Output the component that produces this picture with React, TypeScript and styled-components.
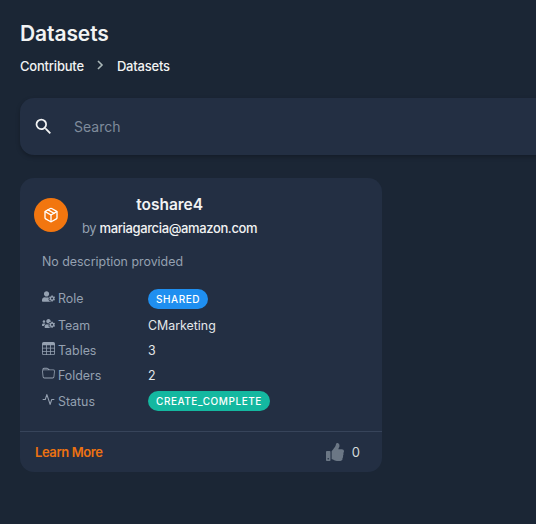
import { FC, Fragment, ReactNode } from 'react'
import styled, { createGlobalStyle } from 'styled-components'
import { Package } from 'lucide-react'
import { BsFolder, BsTable } from 'react-icons/bs'
import { FaThumbsUp, FaUserCog, FaUsersCog } from 'react-icons/fa'
import { FiActivity } from 'react-icons/fi'
import { MdSearch } from 'react-icons/md'

const GlobalStyle = createGlobalStyle`
  html, body {
    margin: 0;
    width: 536px;
    height: 524px;
    overflow: hidden;
    background: #1b2635;
    font-family: Inter, "Liberation Sans", sans-serif;
    color: #f2f3f3;
  }
`

const Page = styled.div`
  box-sizing: border-box;
  width: 536px;
  height: 524px;
  padding: 20px 0 0 20px;
  overflow: hidden;
`

const Heading = styled.h1`
  margin: 0;
  font-size: 21px;
  line-height: 28px;
  font-weight: 600;
  letter-spacing: -0.1px;
`

const Crumbs = styled.nav`
  display: flex;
  align-items: center;
  gap: 11.5px;
  margin-top: 8px;
  font-size: 13px;
  line-height: 20px;
  font-weight: 500;
  letter-spacing: -0.2px;

  svg {
    margin-bottom: 3px;
  }
`

const SearchBar = styled.div`
  display: flex;
  align-items: center;
  gap: 20px;
  width: 560px;
  height: 57px;
  margin-top: 22px;
  padding-left: 13px;
  border-radius: 14px;
  background: #232f43;
  box-sizing: border-box;
  box-shadow: 0 2px 4px rgba(0, 0, 0, 0.25);
`

const SearchText = styled.span`
  font-size: 14px;
  color: #7f8b9b;
`

const Card = styled.section`
  width: 362px;
  height: 294px;
  margin-top: 23px;
  display: flex;
  flex-direction: column;
  border-radius: 14px;
  background: #232f43;
`

const CardBody = styled.div`
  flex: 1;
  box-sizing: border-box;
  padding: 15px 14px 0 14px;
`

const CardHeader = styled.div`
  display: flex;
  gap: 14px;
`

const Badge = styled.div`
  display: flex;
  align-items: center;
  justify-content: center;
  width: 34px;
  height: 34px;
  margin-top: 5px;
  border-radius: 50%;
  background: #f2760f;
`

const Titles = styled.div`
  display: flex;
  flex-direction: column;
  align-items: center;
`

const Title = styled.div`
  font-size: 15.5px;
  line-height: 24px;
  font-weight: 600;
`

const Owner = styled.div`
  font-size: 13px;
  line-height: 20px;
  letter-spacing: -0.37px;
  color: #95a1b1;
  margin-top: 1px;

  b {
    font-weight: 500;
    color: #f2f3f3;
  }
`

const Description = styled.p`
  margin: 14px 0 0 8px;
  font-size: 12.4px;
  line-height: 20px;
  color: #95a1b1;
`

const Rows = styled.div`
  display: grid;
  grid-template-columns: 106px 1fr;
  grid-template-rows: 27px 26px 25px 25px 26px;
  margin: 13px 0 0 8px;
  align-items: center;
`

const Label = styled.div`
  display: flex;
  align-items: center;
  gap: 3px;
  font-size: 12.4px;
  color: #95a1b1;

  svg {
    width: 13px;
    height: 13px;
    margin-bottom: 4px;
  }
`

const Value = styled.div`
  font-size: 12.4px;
  color: #e4e7ea;
`

const Pill = styled.span<{ $bg: string }>`
  display: inline-block;
  padding: 0 8px;
  height: 20px;
  line-height: 20px;
  border-radius: 10px;
  background: ${({ $bg }) => $bg};
  font-size: 10px;
  font-weight: 500;
  letter-spacing: 0.55px;
  color: #fff;
`

const CardFooter = styled.footer`
  display: flex;
  align-items: center;
  justify-content: space-between;
  height: 40px;
  padding: 0 22px 0 15px;
  border-top: 1px solid #37445a;
`

const LearnMore = styled.span`
  font-size: 13px;
  font-weight: 600;
  letter-spacing: -0.4px;
  color: #ec7211;
`

const Likes = styled.div`
  display: flex;
  align-items: center;
  gap: 8px;
  font-size: 13px;
  color: #d5dbdb;

  svg {
    color: #6b7785;
  }
`

interface Row {
  label: string
  icon: ReactNode
  value: ReactNode
}

const rows: Row[] = [
  { label: 'Role', icon: <FaUserCog />, value: <Pill $bg="#1f8ff0">SHARED</Pill> },
  { label: 'Team', icon: <FaUsersCog />, value: 'CMarketing' },
  { label: 'Tables', icon: <BsTable />, value: '3' },
  { label: 'Folders', icon: <BsFolder />, value: '2' },
  { label: 'Status', icon: <FiActivity />, value: <Pill $bg="#14b8a0">CREATE_COMPLETE</Pill> },
]

const App: FC = () => (
  <>
    <GlobalStyle />
    <Page>
      <Heading>Datasets</Heading>
      <Crumbs>
        <span>Contribute</span>
        <svg width="10" height="12" viewBox="0 0 10 12" fill="none" stroke="#aab7b8" strokeWidth="1.6">
          <path d="M3 2l4 4l-4 4" />
        </svg>
        <span>Datasets</span>
      </Crumbs>
      <SearchBar>
        <MdSearch size={21} color="#f2f3f3" />
        <SearchText>Search</SearchText>
      </SearchBar>
      <Card>
        <CardBody>
          <CardHeader>
            <Badge>
              <Package size={16} color="#fff" strokeWidth={2} />
            </Badge>
            <Titles>
              <Title>toshare4</Title>
              <Owner>
                by <b>mariagarcia@amazon.com</b>
              </Owner>
            </Titles>
          </CardHeader>
          <Description>No description provided</Description>
          <Rows>
            {rows.map(({ label, icon, value }) => (
              <Fragment key={label}>
                <Label>
                  {icon}
                  {label}
                </Label>
                <Value>{value}</Value>
              </Fragment>
            ))}
          </Rows>
        </CardBody>
        <CardFooter>
          <LearnMore>Learn More</LearnMore>
          <Likes>
            <FaThumbsUp size={18} />0
          </Likes>
        </CardFooter>
      </Card>
    </Page>
  </>
)

export default App
